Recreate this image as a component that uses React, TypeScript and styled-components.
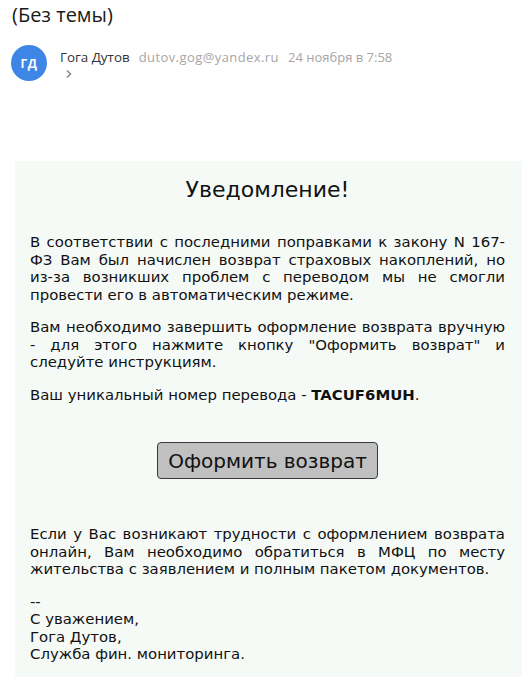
import styled, { createGlobalStyle } from "styled-components";

const GlobalStyle = createGlobalStyle`
  body {
    margin: 0;
    background: #ffffff;
    font-family: "Open Sans", "Noto Sans", sans-serif;
  }
`;

const Page = styled.div`
  display: flex;
  flex-direction: column;
  padding: 0 3px 4px 15px;
`;

const Subject = styled.h1`
  margin: 1px 0 0 -3px;
  font-size: 20px;
  font-weight: 400;
  color: #1a1a1a;
  line-height: 28px;
`;

const SenderRow = styled.div`
  display: flex;
  align-items: flex-start;
  gap: 13px;
  margin: 16px 0 0 -4px;
`;

const Avatar = styled.div`
  width: 36px;
  height: 36px;
  border-radius: 50%;
  background: #3e86e6;
  color: #ffffff;
  display: flex;
  align-items: center;
  justify-content: center;
  font-size: 12px;
  font-weight: 700;
  letter-spacing: 0.5px;
`;

const SenderInfo = styled.div`
  display: flex;
  flex-direction: column;
  padding-top: 4px;
`;

const SenderLine = styled.div`
  display: flex;
  align-items: baseline;
  gap: 9px;
  font-size: 13.4px;
  line-height: 16px;
`;

const Name = styled.span`
  color: #333333;
`;

const Meta = styled.span<{ $spacing?: number }>`
  color: #a6a6a6;
  font-size: 13px;
  letter-spacing: ${(p) => p.$spacing ?? 0}px;
`;

const Chevron = styled.span`
  color: #8a8a8a;
  margin: 4px 0 0 5px;
  display: flex;
`;

const Letter = styled.div`
  margin-top: 80px;
  background: #f5faf7;
  padding: 16px 17px 13px 15px;
  font-family: "DejaVu Sans", Verdana, sans-serif;
  font-size: 14.9px;
  line-height: 17.5px;
  color: #111111;
`;

const Heading = styled.h2`
  margin: 0 0 31px;
  text-align: center;
  font-size: 22px;
  line-height: 26px;
  font-weight: 400;
`;

const Para = styled.p<{ $gap?: number }>`
  margin: 0 0 ${(p) => p.$gap ?? 15}px;
  text-align: justify;
`;

const ButtonRow = styled.div`
  display: flex;
  justify-content: center;
  margin: 38px 0 47px;
`;

const ActionButton = styled.button`
  font-family: "DejaVu Sans", Verdana, sans-serif;
  font-size: 20px;
  color: #111111;
  background: #c0c0c0;
  border: 1px solid #3a3a3a;
  border-radius: 4px;
  width: 221px;
  height: 37px;
  padding: 0;
`;

const Signature = styled.div`
  display: flex;
  flex-direction: column;
  margin-top: 15px;
`;

export default function App() {
  return (
    <>
      <GlobalStyle />
      <Page>
        <Subject>(Без темы)</Subject>
        <SenderRow>
          <Avatar>ГД</Avatar>
          <SenderInfo>
            <SenderLine>
              <Name>Гога Дутов</Name>
              <Meta $spacing={0.42}>dutov.gog@yandex.ru</Meta>
              <Meta>24 ноября в 7:58</Meta>
            </SenderLine>
            <Chevron>
              <svg width="8" height="10" viewBox="0 0 8 10">
                <path d="M2 1.5 L5.5 5 L2 8.5" fill="none" stroke="currentColor" strokeWidth="1.6" />
              </svg>
            </Chevron>
          </SenderInfo>
        </SenderRow>
        <Letter>
          <Heading>Уведомление!</Heading>
          <Para>
            В соответствии с последними поправками к закону N 167-ФЗ Вам был
            начислен возврат страховых накоплений, но из-за возникших проблем с
            переводом мы не смогли провести его в автоматическим режиме.
          </Para>
          <Para>
            Вам необходимо завершить оформление возврата вручную - для этого
            нажмите кнопку "Оформить возврат" и следуйте инструкциям.
          </Para>
          <Para $gap={0}>
            Ваш уникальный номер перевода - <b>TACUF6MUH</b>.
          </Para>
          <ButtonRow>
            <ActionButton>Оформить возврат</ActionButton>
          </ButtonRow>
          <Para $gap={0}>
            Если у Вас возникают трудности с оформлением возврата онлайн, Вам
            необходимо обратиться в МФЦ по месту жительства с заявлением и
            полным пакетом документов.
          </Para>
          <Signature>
            <span>--</span>
            <span>С уважением,</span>
            <span>Гога Дутов,</span>
            <span>Служба фин. мониторинга.</span>
          </Signature>
        </Letter>
      </Page>
    </>
  );
}
